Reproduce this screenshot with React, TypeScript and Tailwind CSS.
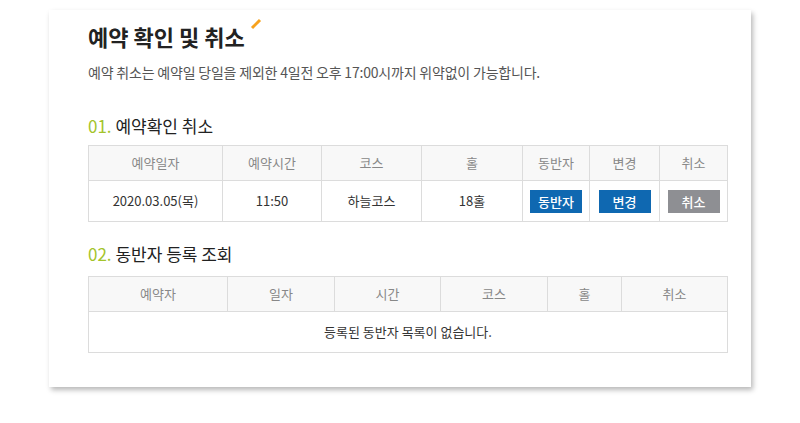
export default function App() {
  const head1 = ["예약일자", "예약시간", "코스", "홀", "동반자", "변경", "취소"];
  const w1 = ["w-[134px]", "w-[99px]", "w-[100px]", "w-[101px]", "w-[67px]", "w-[70px]", "w-[68px]"];
  const head2 = ["예약자", "일자", "시간", "코스", "홀", "취소"];
  const w2 = ["w-[139px]", "w-[107px]", "w-[106px]", "w-[107px]", "w-[74px]", "w-[106px]"];

  return (
    <div className="w-[800px] h-[423px] bg-white pt-[10px] pl-[49px] font-['Noto_Sans_CJK_KR','Noto_Sans',sans-serif]">
      <div className="w-[702px] h-[377px] bg-white shadow-[2px_3px_5px_rgba(0,0,0,0.28)] pl-[39px] pt-[9px]">
        {/* ── Title ── */}
        <div className="relative inline-block">
          <h1 className="text-[22px] font-bold leading-[34px] text-[#222] tracking-[0px]">
            예약 확인 및 취소
          </h1>
          <svg className="absolute -right-[18px] top-[-2px]" width="14" height="14" viewBox="0 0 14 14">
            <line x1="3" y1="11" x2="11" y2="3" stroke="#f7a21d" strokeWidth="3" />
          </svg>
        </div>
        <p className="mt-[9px] text-[14px] leading-[20px] text-[#555] tracking-[-0.2px]">
          예약 취소는 예약일 당일을 제외한 4일전 오후 17:00시까지 위약없이 가능합니다.
        </p>

        {/* ── 01 ── */}
        <h2 className="mt-[32px] text-[17px] leading-[24px] text-[#222]">
          <span className="text-[#a3c42b]">01.</span> 예약확인 취소
        </h2>
        <table className="mt-[7px] w-[639px] border-collapse text-[13px] table-fixed">
          <thead>
            <tr className="h-[35px] bg-[#f8f8f8]">
              {head1.map((h, i) => (
                <th key={h} className={`${w1[i]} border border-[#dcdcdc] font-normal text-[#888]`}>
                  {h}
                </th>
              ))}
            </tr>
          </thead>
          <tbody>
            <tr className="h-[41px] text-[#333] text-center">
              <td className="border border-[#dcdcdc]">2020.03.05(목)</td>
              <td className="border border-[#dcdcdc]">11:50</td>
              <td className="border border-[#dcdcdc]">하늘코스</td>
              <td className="border border-[#dcdcdc]">18홀</td>
              <td className="border border-[#dcdcdc]">
                <button className="w-[52px] h-[23px] bg-[#0f68b1] text-white text-[13px] font-medium leading-[23px]">동반자</button>
              </td>
              <td className="border border-[#dcdcdc]">
                <button className="w-[52px] h-[23px] bg-[#0f68b1] text-white text-[13px] font-medium leading-[23px]">변경</button>
              </td>
              <td className="border border-[#dcdcdc]">
                <button className="w-[52px] h-[23px] bg-[#8e8f93] text-white text-[13px] font-medium leading-[23px]">취소</button>
              </td>
            </tr>
          </tbody>
        </table>

        {/* ── 02 ── */}
        <h2 className="mt-[20px] text-[17px] leading-[24px] text-[#222]">
          <span className="text-[#a3c42b]">02.</span> 동반자 등록 조회
        </h2>
        <table className="mt-[10px] w-[639px] border-collapse text-[13px] table-fixed">
          <thead>
            <tr className="h-[35px] bg-[#f8f8f8]">
              {head2.map((h, i) => (
                <th key={h} className={`${w2[i]} border border-[#dcdcdc] font-normal text-[#888]`}>
                  {h}
                </th>
              ))}
            </tr>
          </thead>
          <tbody>
            <tr className="h-[41px] text-[#333] text-center">
              <td colSpan={6} className="border border-[#dcdcdc]">
                등록된 동반자 목록이 없습니다.
              </td>
            </tr>
          </tbody>
        </table>
      </div>
    </div>
  );
}
